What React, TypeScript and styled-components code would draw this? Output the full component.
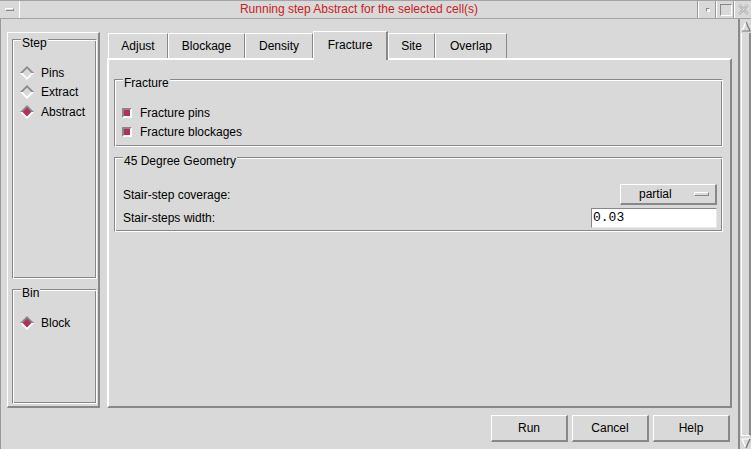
import React from "react";
import styled, { createGlobalStyle } from "styled-components";

const bg = "#d9d9d9";
const dark = "#888888";
const light = "#ffffff";
const select = "#b03060";

const GlobalStyle = createGlobalStyle`
  html, body {
    margin: 0;
    padding: 0;
    background: ${bg};
  }
  body {
    font-family: "Liberation Sans", Arial, sans-serif;
    font-size: 12px;
    color: #000;
  }
`;

const Window = styled.div`
  width: 751px;
  height: 449px;
  display: flex;
  flex-direction: column;
  background: ${bg};
  overflow: hidden;
`;

const TitleBar = styled.div`
  height: 17px;
  display: flex;
  border-top: 1px solid #a3a3a3;
  border-bottom: 1px solid #a3a3a3;
`;

const MenuBox = styled.div`
  width: 19px;
  border-right: 1px solid ${light};
  display: flex;
  align-items: center;
  justify-content: center;
`;

const MinusGlyph = styled.div`
  width: 7px;
  height: 1px;
  border: 1px solid;
  border-color: ${light} ${dark} ${dark} ${light};
`;

const TitleText = styled.div`
  flex: 1;
  text-align: center;
  line-height: 17px;
  color: #c92222;
`;

const WinButton = styled.div<{ $width?: number }>`
  width: ${(p) => p.$width ?? 17}px;
  border-left: 1px solid ${light};
  box-shadow: -1px 0 0 #9a9a9a;
  display: flex;
  align-items: center;
  justify-content: center;
`;

const TinySquare = styled.div`
  width: 2px;
  height: 2px;
  border: 1px solid;
  border-color: ${dark} ${light} ${light} ${dark};
  background: #eee;
`;

const BigSquare = styled.div`
  width: 10px;
  height: 10px;
  border: 1px solid;
  border-color: ${dark} ${light} ${light} ${dark};
`;

const Body = styled.div`
  flex: 1;
  display: flex;
`;

const Main = styled.div`
  width: 738px;
  box-sizing: border-box;
  border-left: 1px solid #9a9a9a;
  padding: 12px 6px 0 6px;
  display: flex;
  flex-direction: column;
`;

const ContentRow = styled.div`
  height: 377px;
  display: flex;
  gap: 7px;
`;

const LeftColumn = styled.div`
  width: 93px;
  margin-top: 1px;
  box-sizing: border-box;
  border-style: solid;
  border-width: 1px 2px 2px 1px;
  border-color: ${light} ${dark} ${dark} ${light};
  padding: 6px 1px 2px 4px;
  display: flex;
  flex-direction: column;
  gap: 10px;
`;

const Group = styled.div<{ $height?: number; $grow?: boolean }>`
  position: relative;
  box-sizing: border-box;
  border-style: solid;
  border-width: 1px;
  border-color: ${dark} ${light} ${light} ${dark};
  box-shadow: inset 1px 1px 0 ${light}, inset -1px -1px 0 ${dark};
  ${(p) => (p.$height ? `height: ${p.$height}px; flex: none;` : "")}
  ${(p) => (p.$grow ? "flex: 1;" : "")}
`;

const GroupTitle = styled.span`
  position: absolute;
  top: -4px;
  left: 8px;
  padding: 0 1px;
  line-height: 14px;
  background: ${bg};
`;

const RadioList = styled.div`
  padding-top: 23px;
  display: flex;
  flex-direction: column;
`;

const RadioRow = styled.div`
  height: 19.5px;
  display: flex;
  align-items: center;
  gap: 7px;
  padding-left: 7px;
`;

const TabArea = styled.div`
  flex: 1;
  display: flex;
  flex-direction: column;
`;

const TabRow = styled.div`
  height: 27px;
  display: flex;
  align-items: flex-end;
  padding-left: 1px;
`;

const Tab = styled.div<{ $width: number; $active?: boolean }>`
  width: ${(p) => p.$width}px;
  box-sizing: border-box;
  height: ${(p) => (p.$active ? 29 : 25)}px;
  margin-bottom: ${(p) => (p.$active ? -2 : 0)}px;
  position: relative;
  z-index: ${(p) => (p.$active ? 1 : 0)};
  background: ${bg};
  border-style: solid;
  border-width: ${(p) => (p.$active ? "1px 2px 0 1px" : "1px 1px 0 1px")};
  border-color: ${light} ${dark} ${light} ${light};
  display: flex;
  align-items: center;
  justify-content: center;
  padding-bottom: ${(p) => (p.$active ? 3 : 0)}px;
`;

const Panel = styled.div`
  flex: 1;
  box-sizing: border-box;
  border: 2px solid;
  border-color: ${light} ${dark} ${dark} ${light};
  padding: 19px 7px 0 5px;
  display: flex;
  flex-direction: column;
`;

const GroupBody = styled.div<{ $top: number; $bottom: number; $left: number; $right?: number; $gap?: number }>`
  padding: ${(p) => `${p.$top}px ${p.$right ?? 0}px ${p.$bottom}px ${p.$left}px`};
  display: flex;
  flex-direction: column;
  gap: ${(p) => p.$gap ?? 0}px;
`;

const CheckRow = styled.div`
  height: 19.5px;
  display: flex;
  align-items: center;
  gap: 8px;
`;

const CheckBox = styled.span`
  width: 10px;
  height: 10px;
  box-sizing: border-box;
  border: 2px solid;
  border-color: ${dark} ${light} ${light} ${dark};
  background: ${select};
`;

const Spacer = styled.div`
  height: 10px;
`;

const FormRow = styled.div<{ $height: number }>`
  height: ${(p) => p.$height}px;
  display: flex;
  align-items: center;
  justify-content: space-between;
`;

const OptionButton = styled.div`
  width: 97px;
  height: 21px;
  box-sizing: border-box;
  border-style: solid;
  border-width: 1px 2px 2px 1px;
  border-color: ${light} ${dark} ${dark} ${light};
  display: flex;
  align-items: center;
  padding-left: 18px;
  padding-right: 6px;
  justify-content: space-between;
`;

const OptionIndicator = styled.span`
  width: 15px;
  height: 4px;
  box-sizing: border-box;
  border: 1px solid;
  border-color: ${light} ${dark} ${dark} ${light};
`;

const Entry = styled.div`
  width: 126px;
  height: 20px;
  box-sizing: border-box;
  background: #fff;
  border: 1px solid;
  border-color: ${dark} #e8e8e8 #e8e8e8 ${dark};
  font-family: "Liberation Mono", "DejaVu Sans Mono", monospace;
  font-size: 13px;
  line-height: 18px;
  padding-left: 1px;
`;

const ButtonBar = styled.div`
  margin-top: 7px;
  padding-right: 2px;
  display: flex;
  justify-content: flex-end;
  gap: 4px;
`;

const Button = styled.div`
  width: 77px;
  height: 27px;
  box-sizing: border-box;
  border-style: solid;
  border-width: 1px 2px 2px 1px;
  border-color: ${light} ${dark} ${dark} ${light};
  display: flex;
  align-items: center;
  justify-content: center;
`;

const Scrollbar = styled.div`
  width: 13px;
  box-sizing: border-box;
  border-left: 2px solid #8a8a8a;
  padding-top: 2px;
  display: flex;
  flex-direction: column;
  align-items: stretch;
`;

const ScrollArrow = styled.div`
  height: 11px;
  display: flex;
  justify-content: center;
`;

const Trough = styled.div`
  flex: 1;
  margin: 1px 0 2px 1px;
  border-left: 1px solid ${light};
  border-right: 2px solid #8a8a8a;
  border-bottom: 1px solid ${light};
  background: ${bg};
`;

const Diamond: React.FC<{ on?: boolean }> = ({ on }) => (
  <svg width="14" height="14" viewBox="0 0 14 14">
    <polygon points="0,7 7,0 14,7" fill="#8a8a8a" />
    <polygon points="0,7 7,14 14,7" fill="#ffffff" />
    <polygon points="2.6,7 7,2.6 11.4,7 7,11.4" fill={on ? select : bg} />
  </svg>
);

const CloseGlyph = () => (
  <svg width="11" height="11" viewBox="0 0 11 11">
    <path d="M1 1 L10 10 M10 1 L1 10" stroke="#b8b8b8" strokeWidth="3" />
    <path d="M1 1 L10 10 M10 1 L1 10" stroke="#f4f4f4" strokeWidth="1" strokeDasharray="1 1" />
  </svg>
);

const ArrowUp = () => (
  <svg width="10" height="11" viewBox="0 0 10 11">
    <polygon points="5,1 9,10 1,10" fill={bg} />
    <path d="M1 10 L5 1" stroke="#fff" strokeWidth="1.5" fill="none" />
    <path d="M5 1 L9 10 L1 10" stroke="#7a7a7a" strokeWidth="1.2" fill="none" />
  </svg>
);

const ArrowDown = () => (
  <svg width="10" height="11" viewBox="0 0 10 11">
    <polygon points="1,1 9,1 5,10" fill={bg} />
    <path d="M5 10 L1 1 L9 1" stroke="#fff" strokeWidth="1.2" fill="none" />
    <path d="M9 1 L5 10" stroke="#7a7a7a" strokeWidth="1.5" fill="none" />
  </svg>
);

const tabs = [
  { label: "Adjust", width: 60 },
  { label: "Blockage", width: 77 },
  { label: "Density", width: 68 },
  { label: "Fracture", width: 75, active: true },
  { label: "Site", width: 47 },
  { label: "Overlap", width: 72 },
];

const steps = [
  { label: "Pins", on: false },
  { label: "Extract", on: false },
  { label: "Abstract", on: true },
];

const App: React.FC = () => {
  return (
    <>
      <GlobalStyle />
      <Window>
        <TitleBar>
          <MenuBox>
            <MinusGlyph />
          </MenuBox>
          <TitleText>Running step Abstract for the selected cell(s)</TitleText>
          <WinButton>
            <TinySquare />
          </WinButton>
          <WinButton>
            <BigSquare />
          </WinButton>
          <WinButton $width={16}>
            <CloseGlyph />
          </WinButton>
        </TitleBar>
        <Body>
          <Main>
            <ContentRow>
              <LeftColumn>
                <Group $grow>
                  <GroupTitle>Step</GroupTitle>
                  <RadioList>
                    {steps.map((s) => (
                      <RadioRow key={s.label}>
                        <Diamond on={s.on} />
                        {s.label}
                      </RadioRow>
                    ))}
                  </RadioList>
                </Group>
                <Group $height={115}>
                  <GroupTitle>Bin</GroupTitle>
                  <RadioList>
                    <RadioRow>
                      <Diamond on />
                      Block
                    </RadioRow>
                  </RadioList>
                </Group>
              </LeftColumn>
              <TabArea>
                <TabRow>
                  {tabs.map((t) => (
                    <Tab key={t.label} $width={t.width} $active={t.active}>
                      {t.label}
                    </Tab>
                  ))}
                </TabRow>
                <Panel>
                  <Group>
                    <GroupTitle>Fracture</GroupTitle>
                    <GroupBody $top={23} $bottom={4} $left={7}>
                      <CheckRow>
                        <CheckBox />
                        Fracture pins
                      </CheckRow>
                      <CheckRow>
                        <CheckBox />
                        Fracture blockages
                      </CheckRow>
                    </GroupBody>
                  </Group>
                  <Spacer />
                  <Group>
                    <GroupTitle>45 Degree Geometry</GroupTitle>
                    <GroupBody $top={26} $bottom={3} $left={8} $right={5} $gap={3}>
                      <FormRow $height={21}>
                        <span>Stair-step coverage:</span>
                        <OptionButton>
                          <span>partial</span>
                          <OptionIndicator />
                        </OptionButton>
                      </FormRow>
                      <FormRow $height={20}>
                        <span>Stair-steps width:</span>
                        <Entry>0.03</Entry>
                      </FormRow>
                    </GroupBody>
                  </Group>
                </Panel>
              </TabArea>
            </ContentRow>
            <ButtonBar>
              <Button>Run</Button>
              <Button>Cancel</Button>
              <Button>Help</Button>
            </ButtonBar>
          </Main>
          <Scrollbar>
            <ScrollArrow>
              <ArrowUp />
            </ScrollArrow>
            <Trough />
            <ScrollArrow>
              <ArrowDown />
            </ScrollArrow>
          </Scrollbar>
        </Body>
      </Window>
    </>
  );
};

export default App;
